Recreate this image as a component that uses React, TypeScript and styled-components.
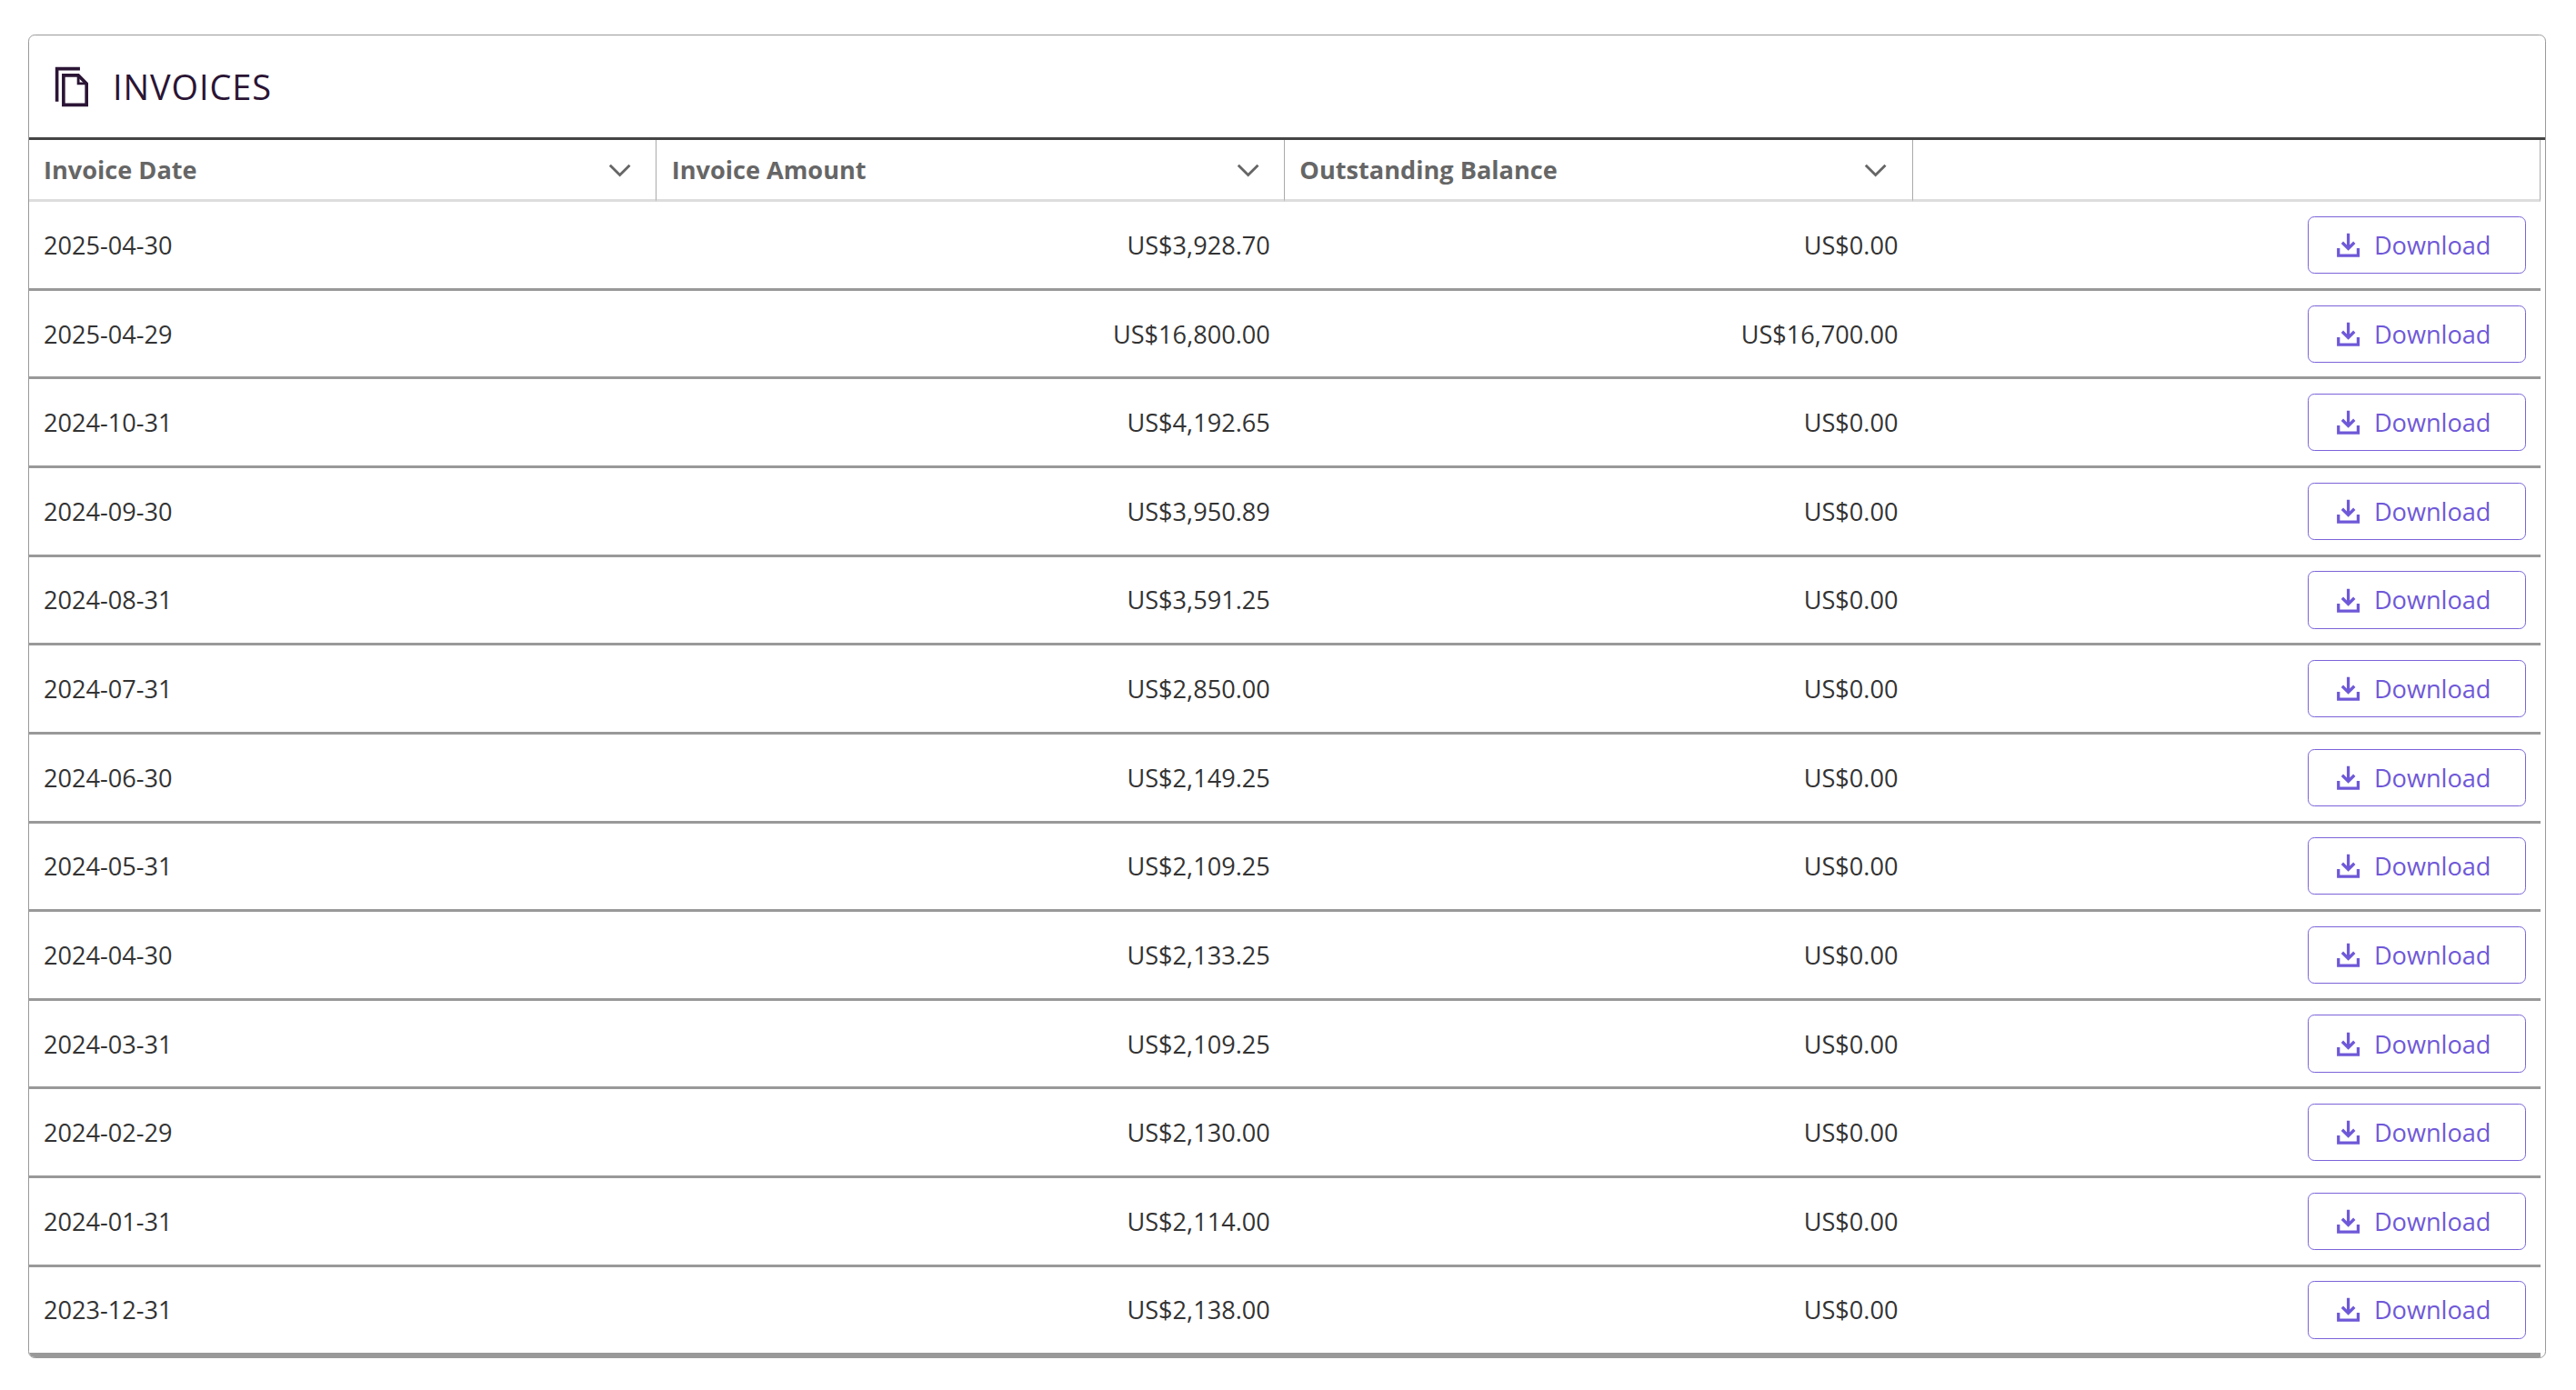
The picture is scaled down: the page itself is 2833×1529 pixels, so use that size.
import styled, { createGlobalStyle } from 'styled-components'

const GlobalStyle = createGlobalStyle`
  html { zoom: 1.809; }
  body {
    margin: 0;
    background: #fff;
    font-family: 'Open Sans', 'Noto Sans', sans-serif;
  }
`

type Invoice = { date: string; amount: string; balance: string }

const invoices: Invoice[] = [
  { date: '2025-04-30', amount: 'US$3,928.70', balance: 'US$0.00' },
  { date: '2025-04-29', amount: 'US$16,800.00', balance: 'US$16,700.00' },
  { date: '2024-10-31', amount: 'US$4,192.65', balance: 'US$0.00' },
  { date: '2024-09-30', amount: 'US$3,950.89', balance: 'US$0.00' },
  { date: '2024-08-31', amount: 'US$3,591.25', balance: 'US$0.00' },
  { date: '2024-07-31', amount: 'US$2,850.00', balance: 'US$0.00' },
  { date: '2024-06-30', amount: 'US$2,149.25', balance: 'US$0.00' },
  { date: '2024-05-31', amount: 'US$2,109.25', balance: 'US$0.00' },
  { date: '2024-04-30', amount: 'US$2,133.25', balance: 'US$0.00' },
  { date: '2024-03-31', amount: 'US$2,109.25', balance: 'US$0.00' },
  { date: '2024-02-29', amount: 'US$2,130.00', balance: 'US$0.00' },
  { date: '2024-01-31', amount: 'US$2,114.00', balance: 'US$0.00' },
  { date: '2023-12-31', amount: 'US$2,138.00', balance: 'US$0.00' },
]

const Page = styled.div`
  padding: 21px 17px 20px 17px;
`

const Card = styled.section`
  border: 1px solid #9a9a9a;
  border-radius: 4px;
  width: 1531px;
  box-sizing: border-box;
  overflow: hidden;
`

const TitleBar = styled.header`
  display: flex;
  align-items: center;
  gap: 12px;
  height: 62px;
  padding-left: 15px;
  border-bottom: 2px solid #444;
`

const Title = styled.h2`
  margin: 0;
  font-size: 21px;
  font-weight: 400;
  letter-spacing: 0.5px;
  color: #2b1535;
`

const Grid = styled.div`
  display: grid;
  grid-template-columns: repeat(4, 381.8px);
  width: 1527px;
`

const HeadCell = styled.div`
  display: flex;
  align-items: center;
  justify-content: space-between;
  height: 36px;
  padding: 0 15px 0 9px;
  font-size: 15px;
  font-weight: 700;
  color: #666;
  border-bottom: 2px solid #ddd;
  border-right: 1px solid #aaa;
`

const Cell = styled.div<{ $align?: 'left' | 'right'; $last?: boolean }>`
  display: flex;
  align-items: center;
  justify-content: ${({ $align }) => ($align === 'right' ? 'flex-end' : 'flex-start')};
  height: 52.3px;
  padding: 0 9px;
  font-size: 15px;
  color: #333;
  border-bottom: ${({ $last }) => ($last ? '3px' : '2px')} solid #999;
`

const ActionCell = styled(Cell)`
  padding-right: 9px;
`

const DownloadButton = styled.button`
  display: flex;
  align-items: center;
  gap: 8px;
  width: 133px;
  height: 35px;
  padding: 0 0 0 17px;
  background: #fff;
  border: 1px solid #7b63d8;
  border-radius: 4px;
  font-family: inherit;
  font-size: 15px;
  color: #6f58d8;
  cursor: pointer;
`

const Chevron = () => (
  <svg width="14" height="9" viewBox="0 0 14 9" fill="none" stroke="#666" strokeWidth="1.6">
    <path d="M1 1.5l6 6 6-6" />
  </svg>
)

const DocIcon = () => (
  <svg width="24" height="26" viewBox="0 0 24 26" fill="none" stroke="#2b1535" strokeWidth="2">
    <path d="M2 22V2h14" />
    <path d="M6 6h9l5 5v13H6z" />
    <path d="M15 6v5h5" strokeWidth="1.6" />
  </svg>
)

const DownloadIcon = () => (
  <svg width="15" height="16" viewBox="0 0 15 16" fill="none" stroke="#6f58d8" strokeWidth="1.8">
    <path d="M7.5 1v9M3.8 6.5l3.7 3.7 3.7-3.7" />
    <path d="M1.5 10v4.5h12V10" />
  </svg>
)

const headers = ['Invoice Date', 'Invoice Amount', 'Outstanding Balance']

export default function App() {
  return (
    <Page>
      <GlobalStyle />
      <Card>
        <TitleBar>
          <DocIcon />
          <Title>INVOICES</Title>
        </TitleBar>
        <Grid>
          {headers.map((h) => (
            <HeadCell key={h}>
              {h}
              <Chevron />
            </HeadCell>
          ))}
          <HeadCell />
          {invoices.map((inv, i) => {
            const last = i === invoices.length - 1
            return [
              <Cell key={inv.date + 'd'} $last={last}>{inv.date}</Cell>,
              <Cell key={inv.date + 'a'} $align="right" $last={last}>{inv.amount}</Cell>,
              <Cell key={inv.date + 'b'} $align="right" $last={last}>{inv.balance}</Cell>,
              <ActionCell key={inv.date + 'x'} $align="right" $last={last}>
                <DownloadButton>
                  <DownloadIcon />
                  Download
                </DownloadButton>
              </ActionCell>,
            ]
          })}
        </Grid>
      </Card>
    </Page>
  )
}
